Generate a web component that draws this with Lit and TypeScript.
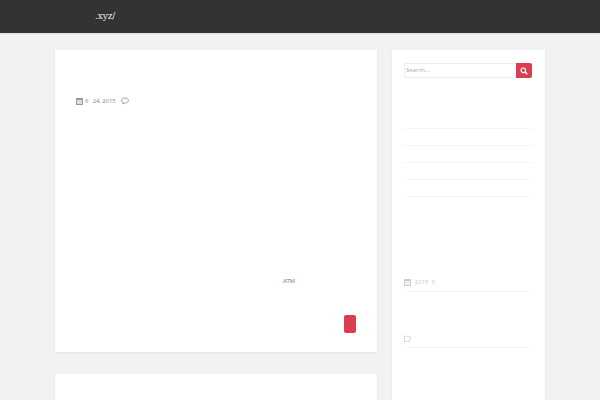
import { LitElement, html, css } from "lit";
import { customElement } from "lit/decorators.js";

@customElement("app-root")
export class AppRoot extends LitElement {
  static styles = css`
    :host { display: block; width: 600px; height: 400px; overflow: hidden; background: #f2f2f2; font-family: "Open Sans", sans-serif; color: #777; }
    .top { height: 33px; background: #333; box-shadow: 0 1px 1px rgba(0,0,0,.08); display: flex; align-items: center; padding: 0 0 0 95px; box-sizing: border-box; }
    .logo { font-family: "DejaVu Serif", serif; font-size: 9px; letter-spacing: -.1px; color: #e8e8e8; line-height: 1; }
    .wrap { display: flex; gap: 15px; padding: 17px 55px 0; align-items: flex-start; }
    .main { width: 322px; display: flex; flex-direction: column; gap: 22px; flex: none; }
    .card { background: #fff; box-shadow: 0 1px 2px rgba(0,0,0,.08); box-sizing: border-box; }
    .post { height: 302px; padding: 45px 21px 0; display: flex; flex-direction: column; }
    .meta { display: flex; align-items: center; height: 11px; font-size: 6px; letter-spacing: -.1px; color: #888; }
    .meta svg { flex: none; }
    .meta .d { margin-left: 2px; }
    .meta .c { margin-left: 5px; }
    .atm { height: 9px; margin-top: 171px; padding-left: 207px; font-size: 6px; letter-spacing: -.3px; line-height: 9px; color: #777; }
    .btnrow { display: flex; justify-content: flex-end; margin-top: 29px; }
    .btn { width: 12px; height: 18px; background: #dc3d50; border-radius: 2px; }
    .side { width: 153px; height: 400px; flex: none; padding: 13px 13px 0 12px; }
    .search { display: flex; height: 15px; }
    .search .in { flex: 1; border: 1px solid #eee; border-right: 0; font-size: 6px; line-height: 13px; color: #aaa; padding-left: 1px; box-sizing: border-box; }
    .search .go { width: 16px; background: #dc3d50; border-radius: 0 2px 2px 0; display: flex; align-items: center; justify-content: center; }
    .rows { margin-top: 35px; }
    .row { height: 17px; border-bottom: 1px solid #f5f5f5; box-sizing: border-box; }
    .row.first { height: 16px; }
    .wid { display: flex; align-items: center; gap: 2px; border-bottom: 1px solid #f5f5f5; font-size: 6px; color: #ccc; box-sizing: content-box; }
    .wid.a { margin-top: 79px; height: 11px; padding-bottom: 4px; }
    .wid.b { margin-top: 40px; height: 12px; padding-bottom: 3px; }
  `;
  render() {
    return html`
      <div class="top"><span class="logo">.xyz/</span></div>
      <div class="wrap">
        <div class="main">
          <div class="card post">
            <div class="meta">
              <svg width="7" height="8" viewBox="0 0 7 8"><path d="M0 1h7v7H0z" fill="#999"/><path d="M1 3h5v4H1z" fill="#ddd"/></svg>
              <span class="d">9&nbsp;&nbsp;&nbsp;24, 2015</span>
              <svg class="c" width="8" height="8" viewBox="0 0 8 8"><path d="M4 1C2 1 .7 2 .7 3.500c0 1 .6 1.700 1.500 2.100L1.800 7 3.600 6H4c2 0 3.300-1 3.300-2.500S6 1 4 1z" fill="none" stroke="#888" stroke-width=".8"/></svg>
            </div>
            <div class="atm">ATM</div>
            <div class="btnrow"><div class="btn"></div></div>
          </div>
          <div class="card post"></div>
        </div>
        <div class="card side">
          <div class="search">
            <div class="in">Search...</div>
            <div class="go"><svg width="8" height="8" viewBox="0 0 8 8"><circle cx="3.300" cy="3.300" r="2.300" fill="none" stroke="#fff" stroke-width="1.200"/><path d="M5 5l2.300 2.300" stroke="#fff" stroke-width="1.400"/></svg></div>
          </div>
          <div class="rows">
            <div class="row first"></div><div class="row"></div><div class="row"></div><div class="row"></div><div class="row"></div>
          </div>
          <div class="wid a">
            <svg width="7" height="8" viewBox="0 0 7 8"><path d="M0 1h7v7H0z" fill="#ccc"/><path d="M1 3h5v4H1z" fill="#eee"/></svg>
            <span>&nbsp;2015&nbsp;&nbsp;9</span>
          </div>
          <div class="wid b">
            <svg width="7" height="7" viewBox="0 0 7 7"><path d="M.5 6.500V1h2l1 1h3l-1 4.500z" fill="none" stroke="#ccc" stroke-width=".8"/></svg>
          </div>
        </div>
      </div>
    `;
  }
}
